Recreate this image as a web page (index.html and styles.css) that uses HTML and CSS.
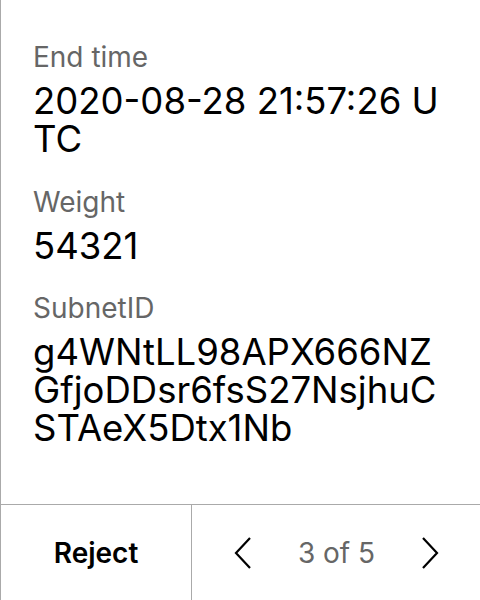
FILE: index.html
```html
<!DOCTYPE html>
<html>
<head>
<meta charset="utf-8">
<link rel="stylesheet" href="styles.css">
</head>
<body>
<div class="panel">
  <div class="details">
    <div class="field">
      <div class="label">End time</div>
      <div class="value">2020-08-28 21:57:26 UTC</div>
    </div>
    <div class="field">
      <div class="label">Weight</div>
      <div class="value">54321</div>
    </div>
    <div class="field">
      <div class="label">SubnetID</div>
      <div class="value">g4WNtLL98APX666NZGfjoDDsr6fsS27NsjhuCSTAeX5Dtx1Nb</div>
    </div>
  </div>
  <div class="footer">
    <div class="reject">Reject</div>
    <div class="pager">
      <svg class="chev" width="18" height="32" viewBox="0 0 18 32"><path d="M16 1 L2 16 L16 31" fill="none" stroke="#000" stroke-width="2.2"/></svg>
      <span class="count">3 of 5</span>
      <svg class="chev" width="18" height="32" viewBox="0 0 18 32"><path d="M2 1 L16 16 L2 31" fill="none" stroke="#000" stroke-width="2.2"/></svg>
    </div>
  </div>
</div>
</body>
</html>
```

FILE: styles.css
```css
html, body {
  margin: 0;
  padding: 0;
  background: #fff;
}
body {
  font-family: Inter, "Noto Sans", sans-serif;
  color: #000;
}
.panel {
  width: 480px;
  height: 600px;
  box-sizing: border-box;
  border-left: 1px solid #aaa;
  display: flex;
  flex-direction: column;
}
.details {
  flex: 1;
  padding: 40px 32px 0 32px;
  display: flex;
  flex-direction: column;
  gap: 26.5px;
}
.label {
  font-size: 28px;
  line-height: 34px;
  color: #666;
}
.value {
  margin-top: 8px;
  font-size: 36.5px;
  line-height: 38px;
  word-break: break-all;
}
.footer {
  height: 96px;
  box-sizing: border-box;
  border-top: 1px solid #aaa;
  display: grid;
  grid-template-columns: 191px 1fr;
}
.reject {
  display: flex;
  align-items: center;
  justify-content: center;
  font-size: 28px;
  font-weight: 600;
  border-right: 1px solid #aaa;
}
.pager {
  display: flex;
  align-items: center;
  justify-content: space-between;
  padding: 0 41px 0 42px;
}
.count {
  font-size: 28px;
  color: #666;
}
```
